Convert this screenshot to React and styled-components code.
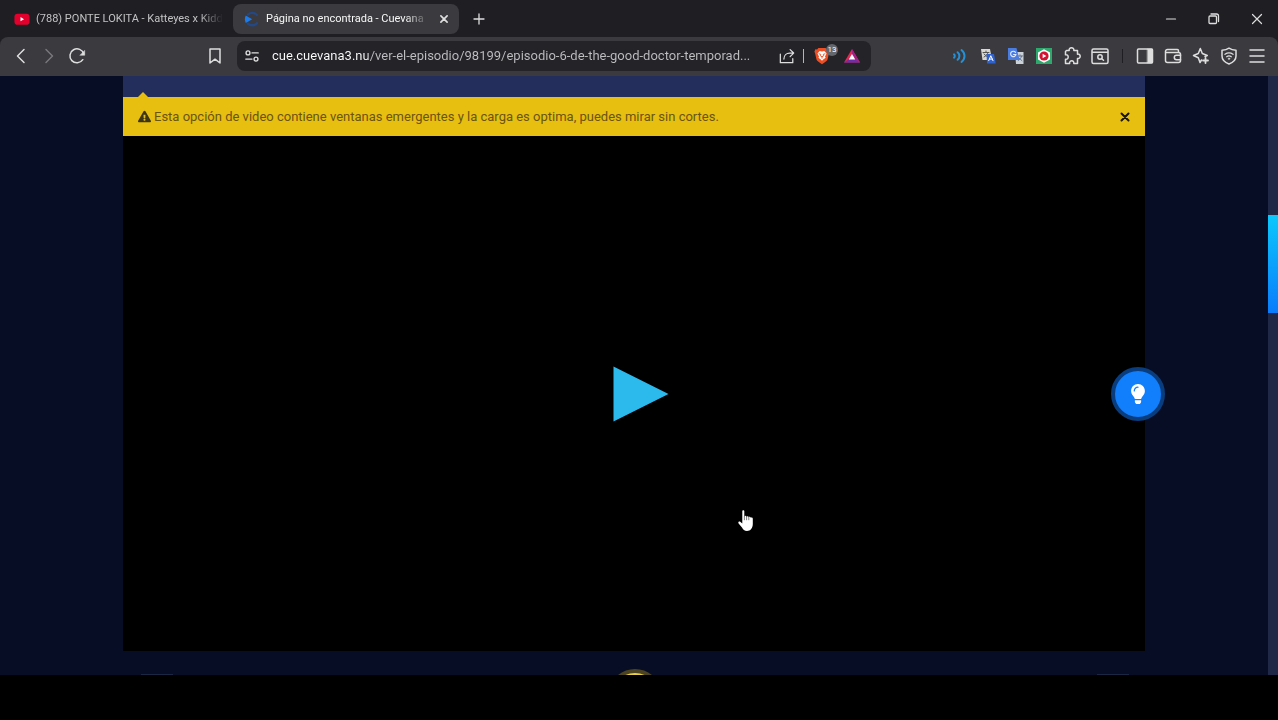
import React, {useState} from "react";
import styled, {createGlobalStyle} from 'styled-components'
import {FaExclamationTriangle, FaLightbulb} from 'react-icons/fa'

const GlobalStyle = createGlobalStyle`
  * {
    box-sizing: border-box;
  }

  body {
    margin: 0;
    background: #000;
    font-family: Roboto, "Open Sans", sans-serif;
  }

  button, input {
    font: inherit;
    color: inherit;
    padding: 0;
    border: 0;
    background: none;
  }
`

const Screen = styled.div`
  display: flex;
  flex-direction: column;
  height: 100vh;
  overflow: hidden;
  background: #1f1e23;
  color: #dededf;
`

const TabStrip = styled.div`
  display: flex;
  align-items: center;
  gap: 4px;
  height: 37px;
  padding-left: 3px;
`

const Tab = styled.div`
  display: flex;
  align-items: center;
  gap: 6px;
  width: 226px;
  height: 30px;
  padding: 0 6px 0 11px;
  border-radius: 8px;
  background: ${props => props.$active ? '#3b3a3e' : 'transparent'};
`

const TabTitle = styled.button`
  flex: 1;
  min-width: 0;
  overflow: hidden;
  text-align: left;
  white-space: nowrap;
  font-size: 11px;
  line-height: 20px;
  color: ${props => props.$active ? '#f8f8f8' : '#c3c3c5'};
  mask-image: linear-gradient(to left, transparent, #000 24px);
`

const IconButton = styled.button`
  display: flex;
  flex: none;
  align-items: center;
  justify-content: center;
  width: ${props => props.$width || 28}px;
  height: 28px;
  color: ${props => props.$dim ? '#78777b' : '#dededf'};
`

const WindowButtons = styled.div`
  display: flex;
  margin-left: auto;
`

const Toolbar = styled.div`
  display: flex;
  align-items: center;
  height: 39px;
  padding: 0 7px 1px;
  border-radius: 8px 8px 0 0;
  background: #3b3a3e;
`

const Group = styled.div`
  display: flex;
  flex: none;
  align-items: center;
`

const NavGroup = styled(Group)`
  margin-right: 110px;
`

const AddressBar = styled.div`
  display: flex;
  flex: 1;
  align-items: center;
  min-width: 0;
  height: 30px;
  margin: 0 75px 0 8px;
  padding: 0 5px 0 1px;
  border-radius: 8px;
  background: #242328;
`

/* the domain is brighter than the rest of the address */
const AddressInput = styled.input`
  flex: 1;
  min-width: 0;
  margin-left: 6px;
  font-size: 13px;
  line-height: 20px;
  color: transparent;
  caret-color: #fff;
  background: linear-gradient(to right, #fff 96px, #bfbfc2 96px);
  background-clip: text;
  outline: none;
`

const Separator = styled.span`
  width: 1px;
  height: 14px;
  margin: 0 ${props => props.$gap}px;
  background: ${props => props.$color};
`

const ShieldButton = styled(IconButton)`
  position: relative;
`

const Badge = styled.span`
  position: absolute;
  top: 2px;
  right: 0;
  width: 12px;
  height: 12px;
  border-radius: 6px;
  background: #63666d;
  color: #fff;
  font-size: 8px;
  line-height: 12px;
  text-align: center;
`

const Viewport = styled.div`
  display: flex;
  flex: 1;
  min-height: 0;
`

const Page = styled.main`
  display: flex;
  flex: 1;
  flex-direction: column;
  position: relative;
  background: #070d25;
`

const Column = styled.div`
  display: flex;
  flex: 1;
  flex-direction: column;
  width: calc(100% - 246px);
  margin: 0 auto;
`

const OptionsBar = styled.div`
  height: 21px;
  background: #242e5c;
`

const Notice = styled.div`
  display: flex;
  align-items: center;
  gap: 3px;
  position: relative;
  height: 39px;
  padding: 0 6px 0 15px;
  background: #e7bf10;
  color: #6b5410;
  font-size: 13px;
  line-height: 20px;

  &::before {
    content: '';
    position: absolute;
    top: -5px;
    left: 14px;
    border: 6px solid transparent;
    border-top: 0;
    border-bottom-color: #e7bf10;
  }

  svg {
    color: #3d3517;
  }
`

const NoticeText = styled.p`
  flex: 1;
  margin: 0;
`

const NoticeClose = styled(IconButton)`
  && svg {
    color: #1c1705;
  }
`

const Player = styled.div`
  display: flex;
  flex: 1;
  align-items: center;
  justify-content: center;
  position: relative;
  background: #000;
`

const PlayButton = styled.button`
  display: flex;
  padding-left: 13px;
`

const Pointer = styled.svg`
  position: absolute;
  top: calc(50% + 116px);
  left: calc(50% + 104px);
`

const EpisodeNav = styled.nav`
  display: flex;
  justify-content: space-between;
  height: 24px;
  padding: 18px 16px 0 18px;
  overflow: hidden;
`

const EpisodeButton = styled.button`
  flex: none;
  width: 32px;
  height: 32px;
  margin-top: 5px;
  border-top: 1px solid #1b2742;
`

const ListButton = styled.button`
  flex: none;
  width: 54px;
  height: 54px;
  border: 4px solid #4b4322;
  border-radius: 50%;
  background: #e7cf4a;
`

const LightButton = styled.button`
  display: flex;
  align-items: center;
  justify-content: center;
  position: absolute;
  top: 291px;
  right: 103px;
  width: 54px;
  height: 54px;
  border: 4px solid #093d7e;
  border-radius: 50%;
  background: #117efc;
  color: #fff;
`

const ScrollTrack = styled.div`
  width: 10px;
  padding-top: 139px;
  background: #202848;
`

const ScrollThumb = styled.div`
  height: 98px;
  background: linear-gradient(#0cc8fc, #0a7cfc);
`

const BottomStrip = styled.footer`
  height: 45px;
  background: #000;
`

const Icon = ({size = 18, children}) => (
    <svg width={size} height={size} viewBox="0 0 18 18" fill="none" stroke="currentColor"
         strokeWidth="1.5" strokeLinecap="round" strokeLinejoin="round" aria-hidden="true">
        {children}
    </svg>
)

const YoutubeIcon = () => (
    <Icon size={16}>
        <rect x="0.5" y="3" width="17" height="12.5" rx="3.5" fill="#e3002c" stroke="none"/>
        <path d="M7.3 6.8v4.8l4-2.4z" fill="#fff" stroke="none"/>
    </Icon>
)

const CuevanaIcon = () => (
    <Icon size={16}>
        <path d="M14.5 4.5A7 7 0 0 0 4.5 4" stroke="#234883" strokeWidth="2.6"/>
        <path d="M4.500 14.2a7 7 0 0 0 10-.5" stroke="#234883" strokeWidth="2.6"/>
        <path d="M2 5.200 9.200 9.300 2 13.400C.6 10.600.6 8 2 5.200z" fill="#1c7bea" stroke="none"/>
    </Icon>
)

const CloseIcon = ({size = 18, width = 1.9}) => (
    <Icon size={size}><path d="m5.5 5.5 7 7m0-7-7 7" strokeWidth={width}/></Icon>
)

const ShieldIcon = () => (
    <Icon>
        <path d="M5.4 1h7.2l1.3 1.5 1.8-.2.9 2.4-.6 1.2-1.5 6.5c-.3 1.2-2.3 2.7-5.5 4.9-3.2-2.2-5.2-3.7-5.5-4.900L2 5.900l-.6-1.2.9-2.4 1.8.2z" fill="#ec4f24" stroke="none"/>
        <path d="M9 4.6 11.3 4l2.200 2.6-1.5 2.8.6 1.4-2.4 1.6L9 13.7l-1.2-1.3-2.4-1.6.6-1.400-1.5-2.8L6.7 4z" fill="#fff" stroke="none"/>
        <path d="m6 6.8 1.7.5-.4 1.5L9 9.7l1.7-.9-.4-1.5 1.7-.5M9 9.7v1.5" stroke="#ec4f24" strokeWidth="0.9"/>
    </Icon>
)

const BatIcon = () => (
    <Icon>
        <path d="M9 2 17 15.500H1z" fill="#e02a52" stroke="none"/>
        <path d="M17 15.500H1l5-3.500h6z" fill="#6b2fae" stroke="none"/>
        <path d="m9 2 8 13.500-5-3.500L9 7z" fill="#a11f88" stroke="none"/>
        <path d="m9 7 3.200 5.400H5.800z" fill="#fff" stroke="none"/>
    </Icon>
)

const WavesIcon = () => (
    <Icon>
        <g stroke="#2590d6" strokeWidth="2">
            <path d="M3 7.3c1 .8 1 2.600 0 3.400"/>
            <path d="M6.600 5.2c2.400 2 2.400 5.600 0 7.600"/>
            <path d="M10.5 3c4 3.200 4 8.800 0 12"/>
        </g>
    </Icon>
)

const PageTranslateIcon = () => (
    <Icon>
        <path d="M2 2h9l2 11H3.5z" fill="#d8d9d2" stroke="none"/>
        <path d="M4 5.500h6M7 4v1.500M9 5.500c-.6 2-2 3.500-4 4.500M5 7l3.500 3" stroke="#55554f" strokeWidth="1"/>
        <path d="M7.500 7H15l1.700 9.500H8z" fill="#2d62cf" stroke="none"/>
        <path d="m9.700 13.700 2.100-5 2.200 5m-3.600-1.600h3" stroke="#fff" strokeWidth="1"/>
    </Icon>
)

const GoogleTranslateIcon = () => (
    <Icon>
        <path d="M8 5h8.500v12H9z" fill="#ccd2da" stroke="none"/>
        <path d="M10.500 9h5M13 7.800V9m1.700 0c-.5 2-1.800 3.500-3.500 4.500M11.500 10.500l3.500 3.200" stroke="#66778a" strokeWidth="1"/>
        <path d="M1 1h8.500l3 12H1z" fill="#4b7ce0" stroke="none"/>
        <path d="M8.500 5.300a2.700 2.700 0 1 0 .5 2.200H6.600" stroke="#dce8ff" strokeWidth="1.200"/>
    </Icon>
)

const VideoExtensionIcon = () => (
    <Icon>
        <path d="M1 1h16v16H1z" fill="#2fa86d" stroke="none"/>
        <path d="m9 2.200 6 3.400v6.800l-6 3.400-6-3.400V5.600z" fill="#fff" stroke="none"/>
        <circle cx="9" cy="9" r="4.600" fill="#d3132f" stroke="none"/>
        <path d="M7.600 6.700v4.600L11.400 9z" fill="#fff" stroke="none"/>
    </Icon>
)

const App = () => {
    const [url, setUrl] = useState('cue.cuevana3.nu/ver-el-episodio/98199/episodio-6-de-the-good-doctor-temporad...')
    const [notice, setNotice] = useState(true)

    return (
        <Screen>
            <GlobalStyle/>
            <TabStrip>
                <Tab>
                    <YoutubeIcon/>
                    <TabTitle>(788) PONTE LOKITA - Katteyes x Kidd</TabTitle>
                </Tab>
                <Tab $active>
                    <CuevanaIcon/>
                    <TabTitle $active>Página no encontrada - Cuevana</TabTitle>
                    <IconButton $width={18} aria-label="Cerrar pestaña"><CloseIcon size={16}/></IconButton>
                </Tab>
                <IconButton $width={32} aria-label="Nueva pestaña">
                    <Icon><path d="M9 4v10M4 9h10" strokeWidth="1.3"/></Icon>
                </IconButton>
                <WindowButtons>
                    <IconButton $width={43} aria-label="Minimizar">
                        <Icon><path d="M4.5 9h9" strokeWidth="1.2"/></Icon>
                    </IconButton>
                    <IconButton $width={43} aria-label="Restaurar">
                        <Icon>
                            <rect x="4" y="6" width="7.5" height="7.5" rx="1" strokeWidth="1.3"/>
                            <path d="M6 4h5.500a2 2 0 0 1 2 2v5.500" strokeWidth="1.3"/>
                        </Icon>
                    </IconButton>
                    <IconButton $width={43} aria-label="Cerrar">
                        <Icon><path d="m4.500 4.500 9 9m0-9-9 9" strokeWidth="1.2"/></Icon>
                    </IconButton>
                </WindowButtons>
            </TabStrip>

            <Toolbar>
                <NavGroup>
                    <IconButton aria-label="Atrás"><Icon><path d="M12 2.500 5.500 9l6.500 6.500"/></Icon></IconButton>
                    <IconButton $dim aria-label="Adelante"><Icon><path d="M6 2.500 12.500 9 6 15.500"/></Icon></IconButton>
                    <IconButton aria-label="Recargar">
                        <Icon>
                            <path d="M14.800 12.700A7 7 0 1 1 15.700 7"/>
                            <path d="M16.700 3.700v4.600h-4.500z" fill="currentColor" strokeWidth="0.5"/>
                        </Icon>
                    </IconButton>
                </NavGroup>
                <IconButton aria-label="Marcador">
                    <Icon><path d="M4 2h10v14l-5-3.800L4 16z"/></Icon>
                </IconButton>
                <AddressBar>
                    <IconButton aria-label="Información del sitio">
                        <Icon size={16}>
                            <circle cx="4.5" cy="5.5" r="2.2"/>
                            <path d="M9 5.500h7M2 12.500h7"/>
                            <circle cx="13.5" cy="12.5" r="2.2"/>
                        </Icon>
                    </IconButton>
                    <AddressInput aria-label="Dirección" value={url} onChange={e => setUrl(e.target.value)}/>
                    <IconButton aria-label="Compartir">
                        <Icon size={16}>
                            <path d="M1.500 7v9.500h14V12" strokeWidth="1.4"/>
                            <path d="M5.500 12.500c0-4.500 3-6.800 6.500-6.800h3.500M12.500 1.800l4 3.900-4 4" strokeWidth="1.4"/>
                        </Icon>
                    </IconButton>
                    <Separator $gap={2} $color="#b5b5b8"/>
                    <ShieldButton $width={32} aria-label="Brave Shields">
                        <ShieldIcon/>
                        <Badge>13</Badge>
                    </ShieldButton>
                    <IconButton aria-label="Brave Rewards"><BatIcon/></IconButton>
                </AddressBar>
                <Group>
                    <IconButton aria-label="Audio"><WavesIcon/></IconButton>
                    <IconButton aria-label="Traducir página"><PageTranslateIcon/></IconButton>
                    <IconButton aria-label="Google Translate"><GoogleTranslateIcon/></IconButton>
                    <IconButton aria-label="Video"><VideoExtensionIcon/></IconButton>
                    <IconButton aria-label="Extensiones">
                        <Icon>
                            <path d="M3.500 3.500h2.700c-.4-1.700.8-2.700 2.300-2.700s2.700 1 2.300 2.700h3.700v3.700c1.700-.4 2.700.8 2.700 2.100s-1 2.500-2.700 2.100v5.100h-3.700c.3-1.900-.7-2.700-2-2.700s-2.500.8-2.200 2.700H2.500v-4.300c1.900.3 2.700-.8 2.700-2.200s-.8-2.500-2.700-2.200V4.500z"/>
                        </Icon>
                    </IconButton>
                    <IconButton aria-label="Buscar en la página">
                        <Icon>
                            <rect x="1" y="2" width="16" height="14.5" rx="1.5"/>
                            <path d="M1.500 5.200h15"/>
                            <circle cx="9" cy="10" r="2.2"/>
                            <path d="m10.800 11.700 1.700 1.600"/>
                        </Icon>
                    </IconButton>
                    <Separator $gap={8} $color="#1f1e23"/>
                    <IconButton aria-label="Panel lateral">
                        <Icon>
                            <rect x="1.5" y="2" width="15" height="14" rx="1"/>
                            <path d="M11.500 2h5v14h-5z" fill="currentColor" strokeWidth="0.5"/>
                        </Icon>
                    </IconButton>
                    <IconButton aria-label="Cartera">
                        <Icon>
                            <path d="M14.500 5.500V3.700c0-.8-.5-1.200-1.200-1.200H3.500a2 2 0 0 0-2 2v9a2 2 0 0 0 2 2h11a2 2 0 0 0 2-2V7.500a2 2 0 0 0-2-2H2"/>
                            <path d="M16.500 8.300h-4a2.200 2.200 0 0 0 0 4.400h4"/>
                        </Icon>
                    </IconButton>
                    <IconButton aria-label="Leo">
                        <Icon>
                            <path d="M9.500 13 8 15.500 6.300 10.800 1.500 8.500l4.800-2L8.300 1.500l2 5 5 2-2.300 1"/>
                            <path d="M13.500 11v5M11 13.500h5" strokeWidth="1.8"/>
                        </Icon>
                    </IconButton>
                    <IconButton aria-label="VPN">
                        <Icon>
                            <path d="M9 1.200c2 1.400 4.300 2 7 2V9c0 3.800-3 6.500-7 8-4-1.500-7-4.200-7-8V3.200c2.700 0 5-.6 7-2z"/>
                            <path d="M5 7.300c2.500-1.700 5.500-1.700 8 0M6.700 9.700c1.500-1 3.100-1 4.600 0" strokeWidth="1.3"/>
                            <circle cx="9" cy="11.7" r="0.8" fill="currentColor" strokeWidth="0.5"/>
                        </Icon>
                    </IconButton>
                    <IconButton aria-label="Menú">
                        <Icon><path d="M2 3h14M2 9h14M2 15h14"/></Icon>
                    </IconButton>
                </Group>
            </Toolbar>

            <Viewport>
                <Page>
                    <Column>
                        <OptionsBar/>
                        {notice && (
                            <Notice>
                                <FaExclamationTriangle size={13}/>
                                <NoticeText>
                                    Esta opción de video contiene ventanas emergentes y la carga es optima, puedes mirar sin cortes.
                                </NoticeText>
                                <NoticeClose aria-label="Cerrar aviso" onClick={() => setNotice(false)}>
                                    <CloseIcon width={2}/>
                                </NoticeClose>
                            </Notice>
                        )}
                        <Player>
                            <PlayButton aria-label="Reproducir">
                                <svg width="56" height="56" viewBox="0 0 56 56" aria-hidden="true">
                                    <path d="M.5.500v55l55-27.500z" fill="#2cb9ec"/>
                                </svg>
                            </PlayButton>
                            <Pointer width="16" height="22" viewBox="0 0 16 22" aria-hidden="true">
                                <path d="M4.300 1.200c0-1.400 2-1.400 2 0v5.300c.3-.9 1.900-.9 2.200.3.500-.9 2-.7 2.200.5.600-.8 1.900-.6 2.100.500.700-.5 2-.2 2 1V14c0 4.200-2.400 7-5.800 7-2.600 0-3.800-1.200-5-3.400L.600 13.400c-1-1.600.8-2.600 1.900-1.500l1.800 1.700z" fill="#fff"/>
                                <path d="M6.400 6v4.200M8.600 6.500v3.700M10.800 7v3.200" stroke="#000" strokeWidth="0.5"/>
                            </Pointer>
                        </Player>
                        <EpisodeNav>
                            <EpisodeButton aria-label="Episodio anterior"/>
                            <ListButton aria-label="Lista de episodios"/>
                            <EpisodeButton aria-label="Episodio siguiente"/>
                        </EpisodeNav>
                    </Column>
                    <LightButton aria-label="Apagar luces"><FaLightbulb size={20}/></LightButton>
                </Page>
                <ScrollTrack><ScrollThumb/></ScrollTrack>
            </Viewport>
            <BottomStrip/>
        </Screen>
    )
}

export default App
